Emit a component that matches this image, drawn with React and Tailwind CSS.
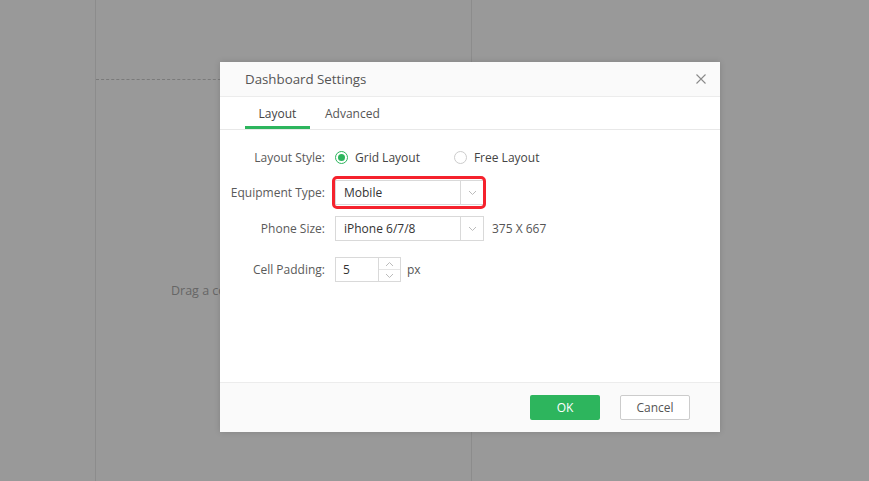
import React from 'react'

const font = { fontFamily: '"Open Sans", "Noto Sans", sans-serif' }

function Chevron({ up }) {
  return (
    <svg width="9" height="6" viewBox="0 0 9 6" className="block">
      <path d={up ? 'M1 5 L4.5 1.5 L8 5' : 'M1 1 L4.5 4.5 L8 1'} fill="none" stroke="#bbb" strokeWidth="1" />
    </svg>
  )
}

function Select({ value, highlight }) {
  return (
    <div className="relative flex h-[25px] w-[149px] items-stretch border border-[#d9d9d9] bg-white">
      <div className="flex flex-1 items-center pl-[8px] text-[12px] text-[#333]">{value}</div>
      <div className="flex w-[23px] items-center justify-center border-l border-[#d9d9d9]">
        <Chevron />
      </div>
      {highlight && (
        <div className="absolute -bottom-[5px] -left-[4px] -right-[3px] -top-[5px] rounded-[5px] border-[3px] border-[#f5222d]" />
      )}
    </div>
  )
}

function Row({ label, children, className = '' }) {
  return (
    <div className={'flex h-[25px] items-center ' + className}>
      <div className="flex w-[115px] shrink-0 justify-end whitespace-nowrap pr-[10px] text-[12px] text-[#5a5a5a]">{label}</div>
      <div className="flex items-center">{children}</div>
    </div>
  )
}

export default function App() {
  return (
    <div className="relative h-[481px] w-[869px] overflow-hidden bg-[#999999]" style={font}>
      {/* background canvas lines */}
      <div className="absolute left-[95px] top-0 h-full w-px bg-[#8c8c8c]" />
      <div className="absolute left-[471px] top-0 h-full w-px bg-[#8c8c8c]" />
      <div className="absolute left-[96px] top-[79px] w-[130px] border-t border-dashed border-[#7a7a7a]" />
      <div className="absolute left-[171px] top-[282px] whitespace-nowrap text-[12.5px] text-[#666]">Drag a component</div>

      {/* modal */}
      <div className="absolute left-[220px] top-[62px] flex h-[370px] w-[500px] flex-col bg-white shadow-[0_0_6px_rgba(0,0,0,0.15)]">
        <div className="flex h-[35px] items-center justify-between border-b border-[#ececec] bg-[#fafafa] pl-[25px] pr-[14px] pt-[2px]">
          <span className="text-[13.3px] text-[#555]">Dashboard Settings</span>
          <svg width="10" height="10" viewBox="0 0 10 10" className="-mt-[2px]">
            <path d="M0.5 0.5 L9.5 9.5 M9.5 0.5 L0.5 9.5" stroke="#8a8a8a" strokeWidth="1.1" />
          </svg>
        </div>
        <div className="flex h-[33px] items-stretch border-b border-[#e8e8e8] pl-[25px]">
          <div className="flex w-[65px] items-center justify-center border-b-[3px] border-[#2db55d] pt-[5px] text-[12px] text-[#444]">Layout</div>
          <div className="ml-[15px] flex items-center pt-[2px] text-[12px] text-[#555]">Advanced</div>
        </div>
        <div className="flex flex-1 flex-col pt-[15px]">
          <Row label="Layout Style:">
            <span className="flex h-[13px] w-[13px] items-center justify-center rounded-full border border-[#2db55d]">
              <span className="h-[7px] w-[7px] rounded-full bg-[#2db55d]" />
            </span>
            <span className="ml-[7px] text-[12px] text-[#444]">Grid Layout</span>
            <span className="ml-[34px] h-[13px] w-[13px] rounded-full border border-[#ccc]" />
            <span className="ml-[7px] text-[12px] text-[#444]">Free Layout</span>
          </Row>
          <Row label="Equipment Type:" className="mt-[10px]">
            <Select value="Mobile" highlight />
          </Row>
          <Row label="Phone Size:" className="mt-[11px]">
            <Select value="iPhone 6/7/8" />
            <span className="ml-[8px] text-[12px] text-[#555]">375 X 667</span>
          </Row>
          <Row label="Cell Padding:" className="mt-[16px]">
            <div className="flex h-[25px] w-[66px] border border-[#d9d9d9] bg-white">
              <div className="flex flex-1 items-center pl-[7px] text-[12px] text-[#333]">5</div>
              <div className="flex w-[22px] flex-col border-l border-[#d9d9d9]">
                <div className="flex flex-1 items-center justify-center border-b border-[#e5e5e5]"><Chevron up /></div>
                <div className="flex flex-1 items-center justify-center"><Chevron /></div>
              </div>
            </div>
            <span className="ml-[6px] text-[12px] text-[#555]">px</span>
          </Row>
        </div>
        <div className="flex h-[50px] items-center justify-end gap-[20px] border-t border-[#ececec] bg-[#fafafa] pr-[30px]">
          <button className="h-[25px] w-[70px] rounded-[2px] bg-[#2db55d] text-[12px] text-white">OK</button>
          <button className="h-[25px] w-[70px] rounded-[2px] border border-[#ccc] bg-white text-[12px] text-[#555]">Cancel</button>
        </div>
      </div>
    </div>
  )
}
